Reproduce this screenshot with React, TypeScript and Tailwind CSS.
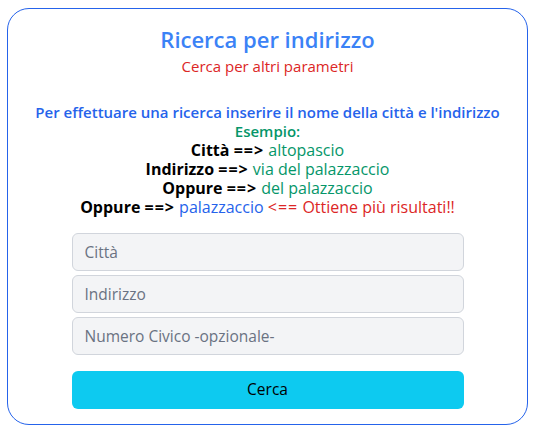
export default function App() {
    return <div className="w-[536px] h-[435px] bg-white pt-2 pl-[7px] font-['Open_Sans',sans-serif]">
        <div className="w-[521px] h-[417px] border border-[#2563eb] rounded-[22px] flex flex-col items-center">
            <div className="mt-[13px] text-[22px] leading-[34px] font-semibold text-[#3b82f6]">
                Ricerca per indirizzo
            </div>
            <div className="text-[15px] leading-[20px] text-[#dc2626]">
                Cerca per altri parametri
            </div>
            <div className="mt-[27px] text-[16px] leading-[19px] text-center">
                <div className="font-semibold text-[15px] text-[#2563eb]">Per effettuare una ricerca inserire il nome della città e l'indirizzo</div>
                <div className="font-semibold text-[15px] text-[#059669]">Esempio:</div>
                <div><span className="font-bold text-black">Città <span className="tracking-[1px]">==&gt;</span></span> <span className="text-[#059669]">altopascio</span></div>
                <div><span className="font-bold text-black">Indirizzo <span className="tracking-[1px]">==&gt;</span></span> <span className="text-[#059669]">via del palazzaccio</span></div>
                <div><span className="font-bold text-black">Oppure <span className="tracking-[1px]">==&gt;</span></span> <span className="text-[#059669]">del palazzaccio</span></div>
                <div>
                    <span className="font-bold text-black">Oppure <span className="tracking-[1px]">==&gt;</span></span> <span className="text-[#2563eb]">palazzaccio</span> <span className="text-[#dc2626]"><span className="tracking-[1px]">&lt;==</span> Ottiene più risultati!!</span>
                </div>
            </div>
            <div className="mt-[16px] w-[392px] flex flex-col gap-[4px]">
                <input placeholder="Città" className="h-[38px] w-full bg-[#f3f4f6] border border-gray-300 rounded-md px-3 text-[15.5px] placeholder-gray-500 outline-none" />
                <input placeholder="Indirizzo" className="h-[38px] w-full bg-[#f3f4f6] border border-gray-300 rounded-md px-3 text-[15.5px] placeholder-gray-500 outline-none" />
                <input placeholder="Numero Civico -opzionale-" className="h-[38px] w-full bg-[#f3f4f6] border border-gray-300 rounded-md px-3 text-[15.5px] placeholder-gray-500 outline-none" />
                <button className="mt-[12px] h-[38px] w-full bg-[#0dcaf0] rounded-md text-[15.5px] text-black">
                    Cerca
                </button>
            </div>
        </div>
    </div>
}
